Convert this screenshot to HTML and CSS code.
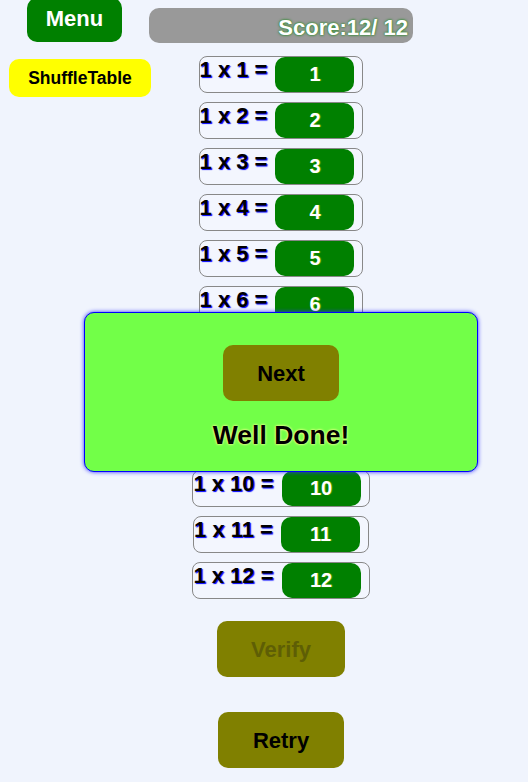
FILE: index.html
```html
<!DOCTYPE html>
<html>
<head>
<meta charset="utf-8">
<title>Times Table</title>
<link rel="stylesheet" href="styles.css">
</head>
<body>
<div class="page">
  <div class="side">
    <button class="btn menu">Menu</button>
    <button class="btn shuffle">ShuffleTable</button>
  </div>
  <div class="main">
    <div class="score">Score:12/ 12</div>
    <div class="rows">
      <div class="row"><span class="label">1 x 1 =</span><span class="answer">1</span></div>
      <div class="row"><span class="label">1 x 2 =</span><span class="answer">2</span></div>
      <div class="row"><span class="label">1 x 3 =</span><span class="answer">3</span></div>
      <div class="row"><span class="label">1 x 4 =</span><span class="answer">4</span></div>
      <div class="row"><span class="label">1 x 5 =</span><span class="answer">5</span></div>
      <div class="row"><span class="label">1 x 6 =</span><span class="answer">6</span></div>
      <div class="row covered"><span class="label">1 x 7 =</span><span class="answer">7</span></div>
      <div class="row covered"><span class="label">1 x 8 =</span><span class="answer">8</span></div>
      <div class="row covered"><span class="label">1 x 9 =</span><span class="answer">9</span></div>
      <div class="row"><span class="label">1 x 10 =</span><span class="answer">10</span></div>
      <div class="row"><span class="label">1 x 11 =</span><span class="answer">11</span></div>
      <div class="row"><span class="label">1 x 12 =</span><span class="answer">12</span></div>
    </div>
    <button class="btn olive verify" disabled>Verify</button>
    <button class="btn olive retry">Retry</button>
  </div>
</div>
<div class="modal">
  <button class="btn olive next">Next</button>
  <div class="done">Well Done!</div>
</div>
</body>
</html>
```

FILE: styles.css
```css
html, body {
  margin: 0;
  padding: 0;
}
body {
  background: #f0f4fd;
  font-family: "Liberation Sans", Arial, sans-serif;
  font-weight: bold;
  width: 528px;
  height: 782px;
  overflow: hidden;
  position: relative;
}
.page {
  display: flex;
  align-items: flex-start;
}
.btn {
  font-family: "Liberation Sans", Arial, sans-serif;
  font-weight: bold;
  border: none;
  padding: 0;
  margin: 0;
  border-radius: 10px;
  display: flex;
  align-items: center;
  justify-content: center;
}
.side {
  width: 149px;
  display: flex;
  flex-direction: column;
  align-items: flex-start;
}
.menu {
  margin: -2px 0 0 27px;
  width: 95px;
  height: 44px;
  padding: 0 0 3px;
  background: #008000;
  color: #ffffff;
  font-size: 22px;
  line-height: 25px;
}
.shuffle {
  margin: 17px 0 0 9px;
  width: 142px;
  height: 38px;
  background: #ffff00;
  color: #000000;
  font-size: 17.5px;
  line-height: 20px;
}
.main {
  width: 264px;
  display: flex;
  flex-direction: column;
  align-items: center;
}
.score {
  margin-top: 8px;
  width: 264px;
  height: 35px;
  box-sizing: border-box;
  background: #999999;
  border-radius: 10px;
  color: #ffffff;
  font-size: 22px;
  line-height: 25px;
  text-align: right;
  padding: 7px 5px 0 0;
  text-shadow: 0 0 3px #2e8b2e, 0 0 2px #2e8b2e;
}
.rows {
  margin-top: 13px;
  display: flex;
  flex-direction: column;
  align-items: center;
  gap: 9px;
}
.row {
  display: flex;
  align-items: flex-start;
  border: 1px solid #888888;
  border-radius: 8px;
  background: #f3f6fe;
}
.covered {
  visibility: hidden;
}
.label {
  font-size: 22px;
  line-height: 25px;
  color: #000000;
  text-shadow: 1px 1px 1px #0000ff;
}
.answer {
  margin: 0 8px;
  width: 79px;
  height: 35px;
  background: #008000;
  border-radius: 10px;
  color: #ffffff;
  font-size: 20px;
  line-height: 35px;
  text-align: center;
  text-shadow: 1px 0 1px rgba(255, 220, 0, 0.45);
}
.olive {
  background: #808000;
  color: #000000;
  font-size: 22px;
  line-height: 25px;
  height: 56px;
}
.verify {
  margin-top: 22px;
  width: 128px;
  color: #5e5e05;
}
.retry {
  margin-top: 35px;
  width: 126px;
}
.modal {
  position: absolute;
  left: 84px;
  top: 312px;
  width: 394px;
  height: 160px;
  box-sizing: border-box;
  background: #72ff48;
  border: 1px solid #0000ff;
  border-radius: 10px;
  box-shadow: 0 0 4px #3030ff;
  display: flex;
  flex-direction: column;
  align-items: center;
  padding-top: 32px;
}
.next {
  width: 116px;
}
.done {
  margin-top: 18px;
  font-family: "Comic Sans MS", "Liberation Sans", sans-serif;
  font-weight: bold;
  font-size: 26.5px;
  line-height: 32px;
  color: #000000;
  text-shadow: 0 0 3px #ffff90, 0 0 2px #ffff90;
}
```
